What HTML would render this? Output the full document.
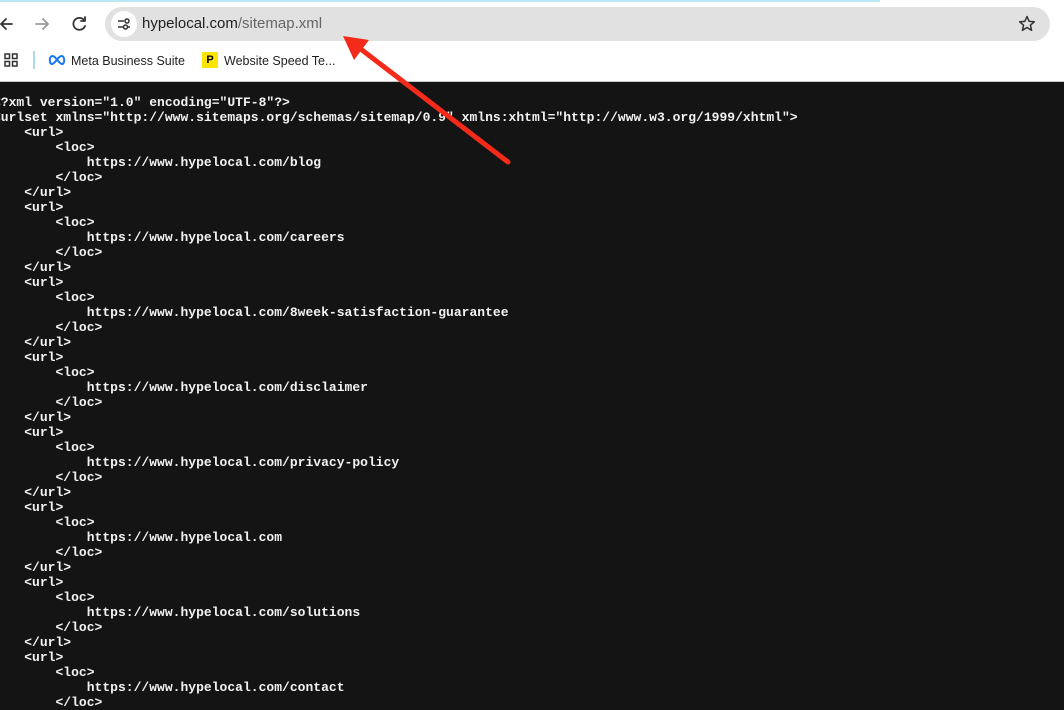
<!DOCTYPE html>
<html><head><style>
body{margin:0;width:1064px;height:706px;overflow:hidden;background:#141414;font-family:"Liberation Sans",sans-serif;position:relative}
#top{position:absolute;left:0;top:0;width:1064px;height:81px;background:#fff;border-bottom:1px solid #c8c8c8}
#cy{position:absolute;left:0;top:0;width:880px;height:2px;background:#b8eaf3}
#addr{position:absolute;left:105px;top:7px;width:945px;height:34px;border-radius:17px;background:#e1e1e1}
#tune{position:absolute;left:111px;top:11px;width:26px;height:26px;border-radius:13px;background:#fff}
#url{position:absolute;left:142px;top:15px;font-size:15px;color:#1f1f1f}
#url span{color:#666}
.bm{position:absolute;top:54px;font-size:12.5px;color:#1f1f1f}
pre{position:absolute;left:-7px;top:95px;margin:0;font-family:"Liberation Mono",monospace;font-weight:bold;font-size:13px;line-height:15px;color:#f2f2f2;letter-spacing:0.01px}
svg{position:absolute}
</style></head><body>
<div id="top"><div id="cy"></div>
<svg style="left:0;top:14px" width="100" height="20" viewBox="0 0 100 20"><g fill="none" stroke-width="1.8" stroke-linecap="round" stroke-linejoin="round"><path d="M12 10H1M6 5L1 10L6 15" stroke="#333"/><path d="M36 10H48M43 5L48 10L43 15" stroke="#999"/><path d="M84 6A6 6 0 1 0 85 12M85 3V7H81" stroke="#333"/></g></svg>
<div id="addr"></div><div id="tune"></div>
<svg style="left:116px;top:16px" width="16" height="16" viewBox="0 0 16 16"><g fill="none" stroke="#333" stroke-width="1.5"><path d="M2 5H8M12 11H14M2 11H7"/><circle cx="11" cy="5" r="2"/><circle cx="9.5" cy="11" r="2"/></g></svg>
<div id="url">hypelocal.com<span>/sitemap.xml</span></div>
<svg style="left:1018px;top:15px" width="18" height="18" viewBox="0 0 18 18"><path d="M9 1.5L11.2 6.4L16.3 6.8L12.4 10.2L13.6 15.3L9 12.5L4.4 15.3L5.6 10.2L1.7 6.8L6.8 6.4Z" fill="none" stroke="#333" stroke-width="1.5" stroke-linejoin="round"/></svg>
<svg style="left:4px;top:53px" width="14" height="14" viewBox="0 0 14 14"><g fill="none" stroke="#333" stroke-width="1.5"><rect x="1" y="1" width="4.5" height="4.5"/><rect x="8.5" y="1" width="4.5" height="4.5"/><rect x="1" y="8.5" width="4.5" height="4.5"/><rect x="8.5" y="8.5" width="4.5" height="4.5"/></g></svg>
<div style="position:absolute;left:33px;top:51px;width:2px;height:18px;background:#a8dcea"></div>
<svg style="left:48px;top:54px" width="18" height="12" viewBox="0 0 18 12"><path d="M4.5 2C1 2 1 10 4 10C7 10 10 2 13.5 2C17 2 17 10 14 10C11 10 8 2 4.5 2Z" fill="none" stroke="#1877f2" stroke-width="2"/></svg>
<div class="bm" style="left:71px">Meta Business Suite</div>
<div style="position:absolute;left:202px;top:52px;width:16px;height:16px;background:#ffe400;font:bold 11px 'Liberation Sans';text-align:center;line-height:16px;color:#000">P</div>
<div class="bm" style="left:224px">Website Speed Te...</div>
</div>
<pre>&lt;?xml version="1.0" encoding="UTF-8"?&gt;
&lt;urlset xmlns="http://www.sitemaps.org/schemas/sitemap/0.9" xmlns:xhtml="http://www.w3.org/1999/xhtml"&gt;
    &lt;url&gt;
        &lt;loc&gt;
            https://www.hypelocal.com/blog
        &lt;/loc&gt;
    &lt;/url&gt;
    &lt;url&gt;
        &lt;loc&gt;
            https://www.hypelocal.com/careers
        &lt;/loc&gt;
    &lt;/url&gt;
    &lt;url&gt;
        &lt;loc&gt;
            https://www.hypelocal.com/8week-satisfaction-guarantee
        &lt;/loc&gt;
    &lt;/url&gt;
    &lt;url&gt;
        &lt;loc&gt;
            https://www.hypelocal.com/disclaimer
        &lt;/loc&gt;
    &lt;/url&gt;
    &lt;url&gt;
        &lt;loc&gt;
            https://www.hypelocal.com/privacy-policy
        &lt;/loc&gt;
    &lt;/url&gt;
    &lt;url&gt;
        &lt;loc&gt;
            https://www.hypelocal.com
        &lt;/loc&gt;
    &lt;/url&gt;
    &lt;url&gt;
        &lt;loc&gt;
            https://www.hypelocal.com/solutions
        &lt;/loc&gt;
    &lt;/url&gt;
    &lt;url&gt;
        &lt;loc&gt;
            https://www.hypelocal.com/contact
        &lt;/loc&gt;
</pre>
<svg style="left:0;top:0" width="1064" height="706"><line x1="508" y1="162" x2="362" y2="50" stroke="#f42a1b" stroke-width="5" stroke-linecap="round"/><polygon points="343,36 369,40 354,60" fill="#f42a1b"/></svg>
</body></html>
